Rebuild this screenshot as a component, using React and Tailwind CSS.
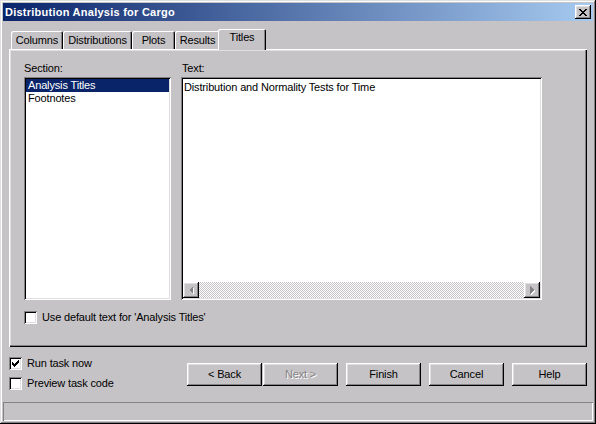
import React from "react";

const raised =
  "shadow-[inset_-1px_-1px_#000,inset_1px_1px_#fff,inset_-2px_-2px_#848284,inset_2px_2px_#dfdfdf]";
const sunken =
  "shadow-[inset_1px_1px_#848284,inset_-1px_-1px_#fff,inset_2px_2px_#000,inset_-2px_-2px_#dfdfdf]";

function CheckBox({ checked }) {
  return (
    <div className={"w-[13px] h-[13px] bg-white flex items-center justify-center shrink-0 " + sunken}>
      {checked && (
        <svg width="7" height="7" viewBox="0 0 7 7" shapeRendering="crispEdges">
          <polygon points="0,2 2,4 7,-1 7,2 2,7 0,5" fill="#000" />
        </svg>
      )}
    </div>
  );
}

function Btn({ children, disabled, className = "" }) {
  return (
    <div
      className={
        "w-[75px] h-[23px] flex items-center justify-center " +
        raised +
        " " +
        (disabled ? "text-[#848284] [text-shadow:1px_1px_#fff] " : "text-black ") +
        className
      }
    >
      {children}
    </div>
  );
}

function Tab({ label, w }) {
  return (
    <div
      className={
        "h-[18px] flex justify-center pt-[3px] rounded-t-[2px] shadow-[inset_1px_1px_#fff,inset_-1px_0_#000,inset_-2px_0_#848284] " +
        w
      }
    >
      {label}
    </div>
  );
}

function ArrowBtn({ dir }) {
  return (
    <div className={"w-[16px] h-[16px] bg-[#c6c3c6] shrink-0 flex items-center justify-center " + raised}>
      <svg width="16" height="16" viewBox="0 0 16 16" shapeRendering="crispEdges">
        {dir === "left" ? (
          <>
            <polygon points="6,8 10,4 10,12" fill="#fff" transform="translate(1,1)" />
            <polygon points="6,8 10,4 10,12" fill="#848284" />
          </>
        ) : (
          <>
            <polygon points="10,8 6,4 6,12" fill="#fff" transform="translate(1,1)" />
            <polygon points="10,8 6,4 6,12" fill="#848284" />
          </>
        )}
      </svg>
    </div>
  );
}

export default function App() {
  return (
    <div className="w-[596px] h-[424px] bg-[#c6c3c6] p-[3px] flex flex-col font-['Liberation_Sans',Arial,sans-serif] text-[11px] leading-[13px] tracking-[-0.15px] text-black shadow-[inset_-1px_-1px_#000,inset_1px_1px_#dfdfdf,inset_-2px_-2px_#848284,inset_2px_2px_#fff] overflow-hidden">
      {/* Title bar */}
      <div className="h-[18px] shrink-0 flex items-center justify-between pl-[2px] pr-[2px] bg-[linear-gradient(to_right,#0a246a,#a6caf0)]">
        <span className="text-white font-bold text-[11px] tracking-[0.25px]">Distribution Analysis for Cargo</span>
        <div className={"w-[16px] h-[14px] bg-[#c6c3c6] flex items-center justify-center " + raised}>
          <svg width="8" height="7" viewBox="0 0 8 7" shapeRendering="crispEdges">
            <path d="M0 0h2v1h1v1h2v-1h1v-1h2v1h-1v1h-1v1h-1v1h1v1h1v1h1v1h-2v-1h-1v-1h-2v1h-1v1h-2v-1h1v-1h1v-1h1v-1h-1v-1h-1v-1h-1z" fill="#000" />
          </svg>
        </div>
      </div>

      {/* Content */}
      <div className="px-[6px] mt-[8px] flex flex-col shrink-0">
        <div className="flex items-end h-[20px] pl-[2px]">
          <Tab label="Columns" w="w-[52px]" />
          <Tab label="Distributions" w="w-[69px]" />
          <Tab label="Plots" w="w-[43px]" />
          <Tab label="Results" w="w-[45px]" />
          <div className="h-[21px] -mb-px -mx-[2px] w-[48px] relative z-10 bg-[#c6c3c6] flex justify-center pt-[2px] rounded-t-[2px] shadow-[inset_1px_1px_#fff,inset_-1px_0_#000,inset_-2px_0_#848284]">
            Titles
          </div>
        </div>
        <div className="h-[298px] pt-[13px] px-[15px] shadow-[inset_1px_1px_#fff,inset_-1px_-1px_#000,inset_-2px_-2px_#848284,inset_2px_2px_#dfdfdf]">
          <div className="flex gap-[10px]">
            <div className="w-[147px] flex flex-col">
              <div className="h-[13px]">Section:</div>
              <div className={"mt-[2px] h-[223px] bg-white p-[2px] " + sunken}>
                <div className="h-[13px] bg-[#0a246a] text-white pl-[2px]">Analysis Titles</div>
                <div className="h-[13px] pl-[2px]">Footnotes</div>
              </div>
            </div>
            <div className="w-[361px] flex flex-col">
              <div className="h-[13px] pl-[1px]">Text:</div>
              <div className={"mt-[2px] h-[223px] bg-white p-[2px] flex flex-col " + sunken}>
                <div className="flex-1 pt-[2px] pl-[1px]">Distribution and Normality Tests for Time</div>
                <div className="h-[16px] flex">
                  <ArrowBtn dir="left" />
                  <div className="flex-1 bg-[repeating-conic-gradient(#c6c3c6_0%_25%,#fff_0%_50%)] bg-[length:2px_2px]" />
                  <ArrowBtn dir="right" />
                </div>
              </div>
            </div>
          </div>
          <div className="mt-[11px] flex items-center gap-[5px]">
            <CheckBox />
            <span>Use default text for 'Analysis Titles'</span>
          </div>
        </div>
      </div>

      {/* Bottom area */}
      <div className="flex-1 flex px-[6px]">
        <div className="pt-[10px] flex flex-col gap-[7px]">
          <div className="flex items-center gap-[5px]">
            <CheckBox checked />
            <span>Run task now</span>
          </div>
          <div className="flex items-center gap-[5px]">
            <CheckBox />
            <span>Preview task code</span>
          </div>
        </div>
        <div className="ml-auto mt-[16px] flex items-start">
          <Btn>&lt; Back</Btn>
          <Btn disabled className="ml-[1px]">Next &gt;</Btn>
          <Btn className="ml-[8px]">Finish</Btn>
          <Btn className="ml-[8px]">Cancel</Btn>
          <Btn className="ml-[8px]">Help</Btn>
        </div>
      </div>

      {/* Status bar */}
      <div className="h-[19px] shrink-0 shadow-[inset_1px_1px_#848284,inset_-1px_-1px_#fff]" />
    </div>
  );
}
